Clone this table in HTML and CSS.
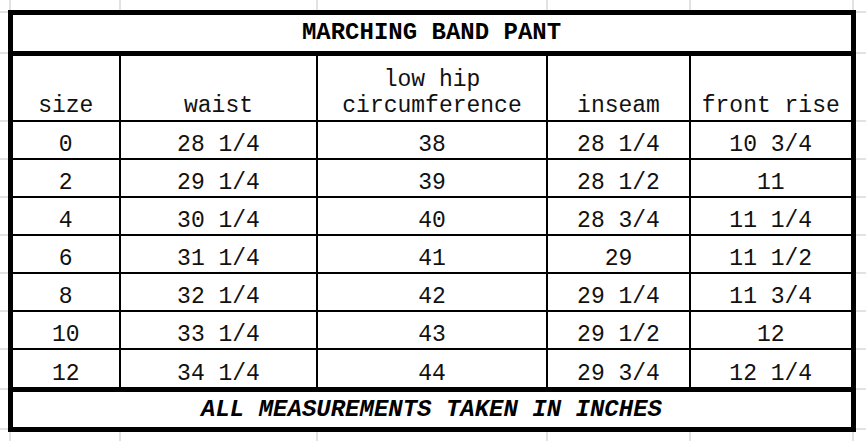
FILE: index.html
```html
<!DOCTYPE html>
<html lang="en">
<head>
<meta charset="utf-8">
<title>Marching Band Pant</title>
<link rel="stylesheet" href="styles.css">
</head>
<body>
<table class="sheet">
  <colgroup>
    <col class="c-m0">
    <col class="c-a">
    <col class="c-b">
    <col class="c-c">
    <col class="c-d">
    <col class="c-e">
    <col class="c-m1">
  </colgroup>
  <tr class="r-top"><td class="m"></td><td class="m"></td><td class="m"></td><td class="m"></td><td class="m"></td><td class="m"></td><td class="m"></td></tr>
  <tr class="r-title"><td class="m"></td><td class="title" colspan="5">MARCHING BAND PANT</td><td class="m"></td></tr>
  <tr class="r-head"><td class="m"></td><td class="d first">size</td><td class="d">waist</td><td class="d">low hip<br>circumference</td><td class="d">inseam</td><td class="d last">front rise</td><td class="m"></td></tr>
  <tr class="r-row"><td class="m"></td><td class="d first">0</td><td class="d">28 1/4</td><td class="d">38</td><td class="d">28 1/4</td><td class="d last">10 3/4</td><td class="m"></td></tr>
  <tr class="r-row"><td class="m"></td><td class="d first">2</td><td class="d">29 1/4</td><td class="d">39</td><td class="d">28 1/2</td><td class="d last">11</td><td class="m"></td></tr>
  <tr class="r-row"><td class="m"></td><td class="d first">4</td><td class="d">30 1/4</td><td class="d">40</td><td class="d">28 3/4</td><td class="d last">11 1/4</td><td class="m"></td></tr>
  <tr class="r-row"><td class="m"></td><td class="d first">6</td><td class="d">31 1/4</td><td class="d">41</td><td class="d">29</td><td class="d last">11 1/2</td><td class="m"></td></tr>
  <tr class="r-row"><td class="m"></td><td class="d first">8</td><td class="d">32 1/4</td><td class="d">42</td><td class="d">29 1/4</td><td class="d last">11 3/4</td><td class="m"></td></tr>
  <tr class="r-row"><td class="m"></td><td class="d first">10</td><td class="d">33 1/4</td><td class="d">43</td><td class="d">29 1/2</td><td class="d last">12</td><td class="m"></td></tr>
  <tr class="r-lastrow"><td class="m"></td><td class="d first">12</td><td class="d">34 1/4</td><td class="d">44</td><td class="d">29 3/4</td><td class="d last">12 1/4</td><td class="m"></td></tr>
  <tr class="r-foot"><td class="m"></td><td class="foot" colspan="5">ALL MEASUREMENTS TAKEN IN INCHES</td><td class="m"></td></tr>
  <tr class="r-bottom"><td class="m"></td><td class="m"></td><td class="m"></td><td class="m"></td><td class="m"></td><td class="m"></td><td class="m"></td></tr>
</table>
</body>
</html>
```
FILE: styles.css
```css
html, body {
  margin: 0;
  padding: 0;
  background: #ffffff;
  overflow: hidden;
}

.sheet {
  border-collapse: collapse;
  table-layout: fixed;
  width: 866px;
  font-family: "Liberation Mono", "Courier New", monospace;
  color: #111111;
}

.c-m0 { width: 10px; }
.c-a { width: 110px; }
.c-b { width: 197px; }
.c-c { width: 230px; }
.c-d { width: 143px; }
.c-e { width: 163px; }
.c-m1 { width: 13px; }

.sheet td {
  padding: 0;
  text-align: center;
}

.m {
  border: 2px solid #e2e2e2;
}

.r-top { height: 12px; }
.r-title { height: 41px; }
.r-head { height: 68px; }
.r-row { height: 38px; }
.r-lastrow { height: 40px; }
.r-foot { height: 40px; }
.r-bottom { height: 12px; }

.r-top .m { border-top: none; }
.r-bottom .m { border-bottom: none; }
.m:first-child { border-left: none; }
.m:last-child { border-right: none; }

.title,
.foot {
  border: 5px solid #000000;
  font-size: 24px;
  font-weight: bold;
  vertical-align: middle;
  line-height: 27px;
  color: #000000;
}

.foot {
  font-style: italic;
}

.d {
  border: 2px solid #000000;
  font-size: 23px;
  line-height: 26px;
  vertical-align: bottom;
  white-space: nowrap;
}

.r-head .d {
  padding-bottom: 1px;
}

.d.first { border-left: 5px solid #000000; }
.d.last { border-right: 5px solid #000000; }
.r-lastrow .d { border-bottom: 5px solid #000000; }
```
